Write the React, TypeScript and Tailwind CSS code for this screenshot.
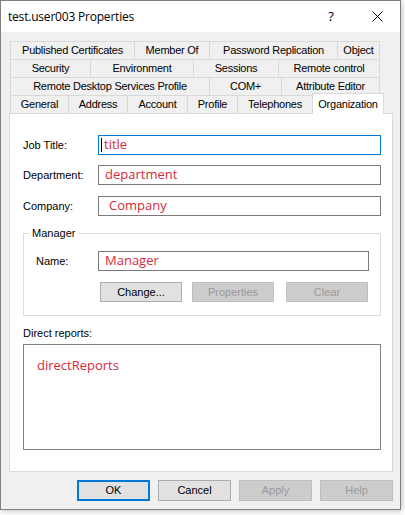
import React from 'react';

type Tab = [string, number];

const upperRows: Tab[][] = [
  [["Published Certificates", 124], ["Member Of", 75], ["Password Replication", 128], ["Object", 43]],
  [["Security", 80], ["Environment", 103], ["Sessions", 85], ["Remote control", 102]],
  [["Remote Desktop Services Profile", 199], ["COM+", 72], ["Attribute Editor", 99]],
];

const lowerRow: Tab[] = [
  ["General", 58],
  ["Address", 59],
  ["Account", 60],
  ["Profile", 50],
  ["Telephones", 75],
];

const sans = "font-['Liberation_Sans',Arial,sans-serif]";
const red = "font-['Open_Sans','Noto_Sans',sans-serif] text-[13px] text-[#d42a3a]";

const Btn: React.FC<{ label: string; size: string; disabled?: boolean; primary?: boolean; className?: string }> = ({
  label,
  size,
  disabled,
  primary,
  className = '',
}) => {
  let look = 'bg-[#e1e1e1] border border-[#adadad] text-black';
  if (disabled) look = 'bg-[#cccccc] border border-[#bfbfbf] text-[#9a9a9a]';
  if (primary) look = 'bg-[#e1e1e1] border-2 border-[#0078d7] text-black';
  return (
    <div className={`${size} flex items-center justify-center text-[11px] ${look} ${className}`}>
      {label}
    </div>
  );
};

const App: React.FC = () => {
  return (
    <div className={`w-[405px] h-[515px] bg-white ${sans} text-black`}>
      <div className="w-[401px] h-[510px] border border-[#7f7f7f] flex flex-col shadow-[1px_1px_6px_rgba(0,0,0,0.25)]">
        {/* Title bar */}
        <div className="h-[31px] bg-white flex items-center pl-[7px]">
          <span className="flex-1 font-['Open_Sans','Noto_Sans',sans-serif] text-[12px] tracking-[-0.2px]">
            test.user003 Properties
          </span>
          <div className="w-[46px] flex justify-center font-['Open_Sans',sans-serif] text-[13px]">?</div>
          <div className="w-[46px] flex justify-center">
            <svg width="11" height="11" viewBox="0 0 11 11">
              <path d="M0.5 0.5 L10.5 10.5 M10.5 0.5 L0.5 10.5" stroke="#000" strokeWidth="1" fill="none" />
            </svg>
          </div>
        </div>

        {/* Body */}
        <div className="flex-1 bg-[#f0f0f0] pt-[9px]">
          <div className="ml-[9px] text-[11px] tracking-[-0.25px]">
            {upperRows.map((row, i) => (
              <div key={i} className="flex h-[18px]">
                {row.map(([label, w], j) => (
                  <div
                    key={label}
                    style={{ width: w }}
                    className={`h-[18px] flex items-center justify-center border-t border-l border-[#d9d9d9] bg-[#f0f0f0] ${
                      j === row.length - 1 ? 'border-r' : ''
                    }`}
                  >
                    {label}
                  </div>
                ))}
              </div>
            ))}
            <div className="flex items-end h-[18px] relative z-10">
              {lowerRow.map(([label, w]) => (
                <div
                  key={label}
                  style={{ width: w }}
                  className="h-[18px] flex items-center justify-center border-t border-l border-[#d9d9d9] bg-[#f0f0f0]"
                >
                  {label}
                </div>
              ))}
              <div className="w-[72px] h-[21px] -mb-px flex items-start justify-center pt-[2px] border-t border-l border-r border-[#d9d9d9] bg-white">
                Organization
              </div>
            </div>
          </div>

          {/* Panel */}
          <div className="ml-[8px] w-[384px] h-[359px] bg-white border border-[#d9d9d9] pt-[21px] pl-[13px] text-[11px]">
            <div className="flex items-center h-[20px]">
              <span className="w-[75px]">Job Title:</span>
              <div className="w-[283px] h-[20px] border border-[#0078d7] flex items-center">
                <span className="ml-[2px] w-px h-[14px] bg-black" />
                <span className={`ml-[2px] ${red}`}>title</span>
              </div>
            </div>
            <div className="flex items-center h-[20px] mt-[10px]">
              <span className="w-[75px]">Department:</span>
              <div className="w-[283px] h-[20px] border border-[#7a7a7a] flex items-center pl-[6px]">
                <span className={red}>department</span>
              </div>
            </div>
            <div className="flex items-center h-[20px] mt-[11px]">
              <span className="w-[75px]">Company:</span>
              <div className="w-[283px] h-[20px] border border-[#7a7a7a] flex items-center pl-[10px]">
                <span className={red}>Company</span>
              </div>
            </div>

            <fieldset className="mt-[10px] w-[358px] border border-[#dcdcdc]">
              <legend className="ml-[5px] px-[3px] leading-[14px]">Manager</legend>
              <div className="pt-[11px] pl-[12px] pb-[13px]">
                <div className="flex items-center h-[20px]">
                  <span className="w-[62px]">Name:</span>
                  <div className="w-[271px] h-[20px] border border-[#7a7a7a] flex items-center pl-[6px]">
                    <span className={red}>Manager</span>
                  </div>
                </div>
                <div className="flex mt-[11px] pl-[64px]">
                  <Btn label="Change..." size="w-[82px] h-[20px]" />
                  <Btn label="Properties" size="w-[82px] h-[20px]" disabled className="ml-[10px]" />
                  <Btn label="Clear" size="w-[82px] h-[20px]" disabled className="ml-[12px]" />
                </div>
              </div>
            </fieldset>

            <div className="mt-[11px] leading-[13px]">Direct reports:</div>
            <div className="mt-[4px] w-[358px] h-[106px] border border-[#828282] pt-[11px] pl-[13px]">
              <span className={red}>directReports</span>
            </div>
          </div>

          {/* Dialog buttons */}
          <div className="flex mt-[8px] pl-[76px] gap-[8px]">
            <Btn label="OK" size="w-[73px] h-[21px]" primary />
            <Btn label="Cancel" size="w-[73px] h-[21px]" />
            <Btn label="Apply" size="w-[73px] h-[21px]" disabled />
            <Btn label="Help" size="w-[73px] h-[21px]" disabled />
          </div>
        </div>
      </div>
    </div>
  );
};

export default App;
